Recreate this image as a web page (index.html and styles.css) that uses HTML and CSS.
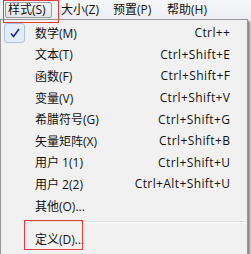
FILE: index.html
```html
<!DOCTYPE html>
<html>
<head>
<meta charset="utf-8">
<link rel="stylesheet" href="styles.css">
</head>
<body>
<div class="screen">
  <div class="menubar">
    <div class="mb-item active w47">样式(S)</div>
    <div class="mb-item w46">大小(Z)</div>
    <div class="mb-item w48">预置(P)</div>
    <div class="mb-item">帮助(H)</div>
  </div>
  <div class="dropdown">
    <div class="row"><span class="gutter"><span class="check"><svg width="12" height="12" viewBox="0 0 12 12"><path d="M2 6.5 L4.6 9.5 L10 2" fill="none" stroke="#1a2a8c" stroke-width="1.7"/></svg></span></span><span class="label">数学(M)</span><span class="key">Ctrl++</span></div>
    <div class="row"><span class="gutter"></span><span class="label">文本(T)</span><span class="key">Ctrl+Shift+E</span></div>
    <div class="row"><span class="gutter"></span><span class="label">函数(F)</span><span class="key">Ctrl+Shift+F</span></div>
    <div class="row"><span class="gutter"></span><span class="label">变量(V)</span><span class="key">Ctrl+Shift+V</span></div>
    <div class="row"><span class="gutter"></span><span class="label">希腊符号(G)</span><span class="key">Ctrl+Shift+G</span></div>
    <div class="row"><span class="gutter"></span><span class="label">矢量矩阵(X)</span><span class="key">Ctrl+Shift+B</span></div>
    <div class="row"><span class="gutter"></span><span class="label">用户 1(1)</span><span class="key">Ctrl+Shift+U</span></div>
    <div class="row"><span class="gutter"></span><span class="label">用户 2(2)</span><span class="key">Ctrl+Alt+Shift+U</span></div>
    <div class="row"><span class="gutter"></span><span class="label">其他(O)...</span><span class="key"></span></div>
    <div class="sep"></div>
    <div class="row"><span class="gutter"></span><span class="label">定义(D)...</span><span class="key"></span></div>
  </div>
  <div class="mark mark-top"></div>
  <div class="mark mark-bottom"></div>
</div>
</body>
</html>
```
FILE: styles.css
```css
html, body {
  margin: 0;
  padding: 0;
  background: #ffffff;
}
.screen {
  position: relative;
  width: 251px;
  height: 254px;
  overflow: hidden;
  font-family: "Open Sans", "Noto Sans CJK SC", sans-serif;
  font-size: 12px;
  color: #111;
  background: #f0f0f0;
}
.menubar {
  height: 19px;
  display: flex;
  align-items: center;
  padding-left: 5px;
  background: linear-gradient(#f6f7f9, #eceef2);
}
.mb-item {
  box-sizing: border-box;
  height: 16px;
  line-height: 14px;
  padding: 0 0 0 2px;
  margin-right: 6px;
  border: 1px solid transparent;
  border-radius: 2px;
  white-space: nowrap;
}
.w47 { width: 47px; }
.w46 { width: 46px; }
.w48 { width: 48px; }
.mb-item.active {
  border-color: #9a9ea6;
  background: linear-gradient(#f4f5f7, #e2e4e8);
}
.dropdown {
  width: 246px;
  height: 230px;
  border: 1px solid #979797;
  background: #f1f1f1;
  padding: 2px 0;
  box-sizing: content-box;
  box-shadow: 2px 2px 2px rgba(0,0,0,0.45);
}
.row {
  height: 21.6px;
  display: flex;
  align-items: center;
  padding: 0 17px 0 2px;
}
.gutter {
  width: 32px;
  flex: none;
  display: flex;
  align-items: center;
}
.check {
  margin-left: 1px;
  width: 19px;
  height: 18px;
  border: 1px solid #a9c2de;
  border-radius: 3px;
  background: #e3ecf7;
  display: flex;
  align-items: center;
  justify-content: center;
}
.label {
  flex: 1;
  white-space: nowrap;
}
.key {
  white-space: nowrap;
  text-align: right;
  letter-spacing: 0.4px;
  margin-right: -0.4px;
}
.sep {
  height: 11.6px;
  display: flex;
  align-items: center;
  padding-left: 29px;
  padding-right: 2px;
}
.sep::before {
  content: "";
  flex: 1;
  height: 0;
  border-top: 1px solid #dcdcdc;
  border-bottom: 1px solid #ffffff;
}
.mark {
  position: absolute;
  border: 1px solid #e0403c;
}
.mark-top {
  left: 3px;
  top: 0;
  width: 54px;
  height: 21px;
}
.mark-bottom {
  left: 24px;
  top: 220px;
  width: 57px;
  height: 28px;
}
```
